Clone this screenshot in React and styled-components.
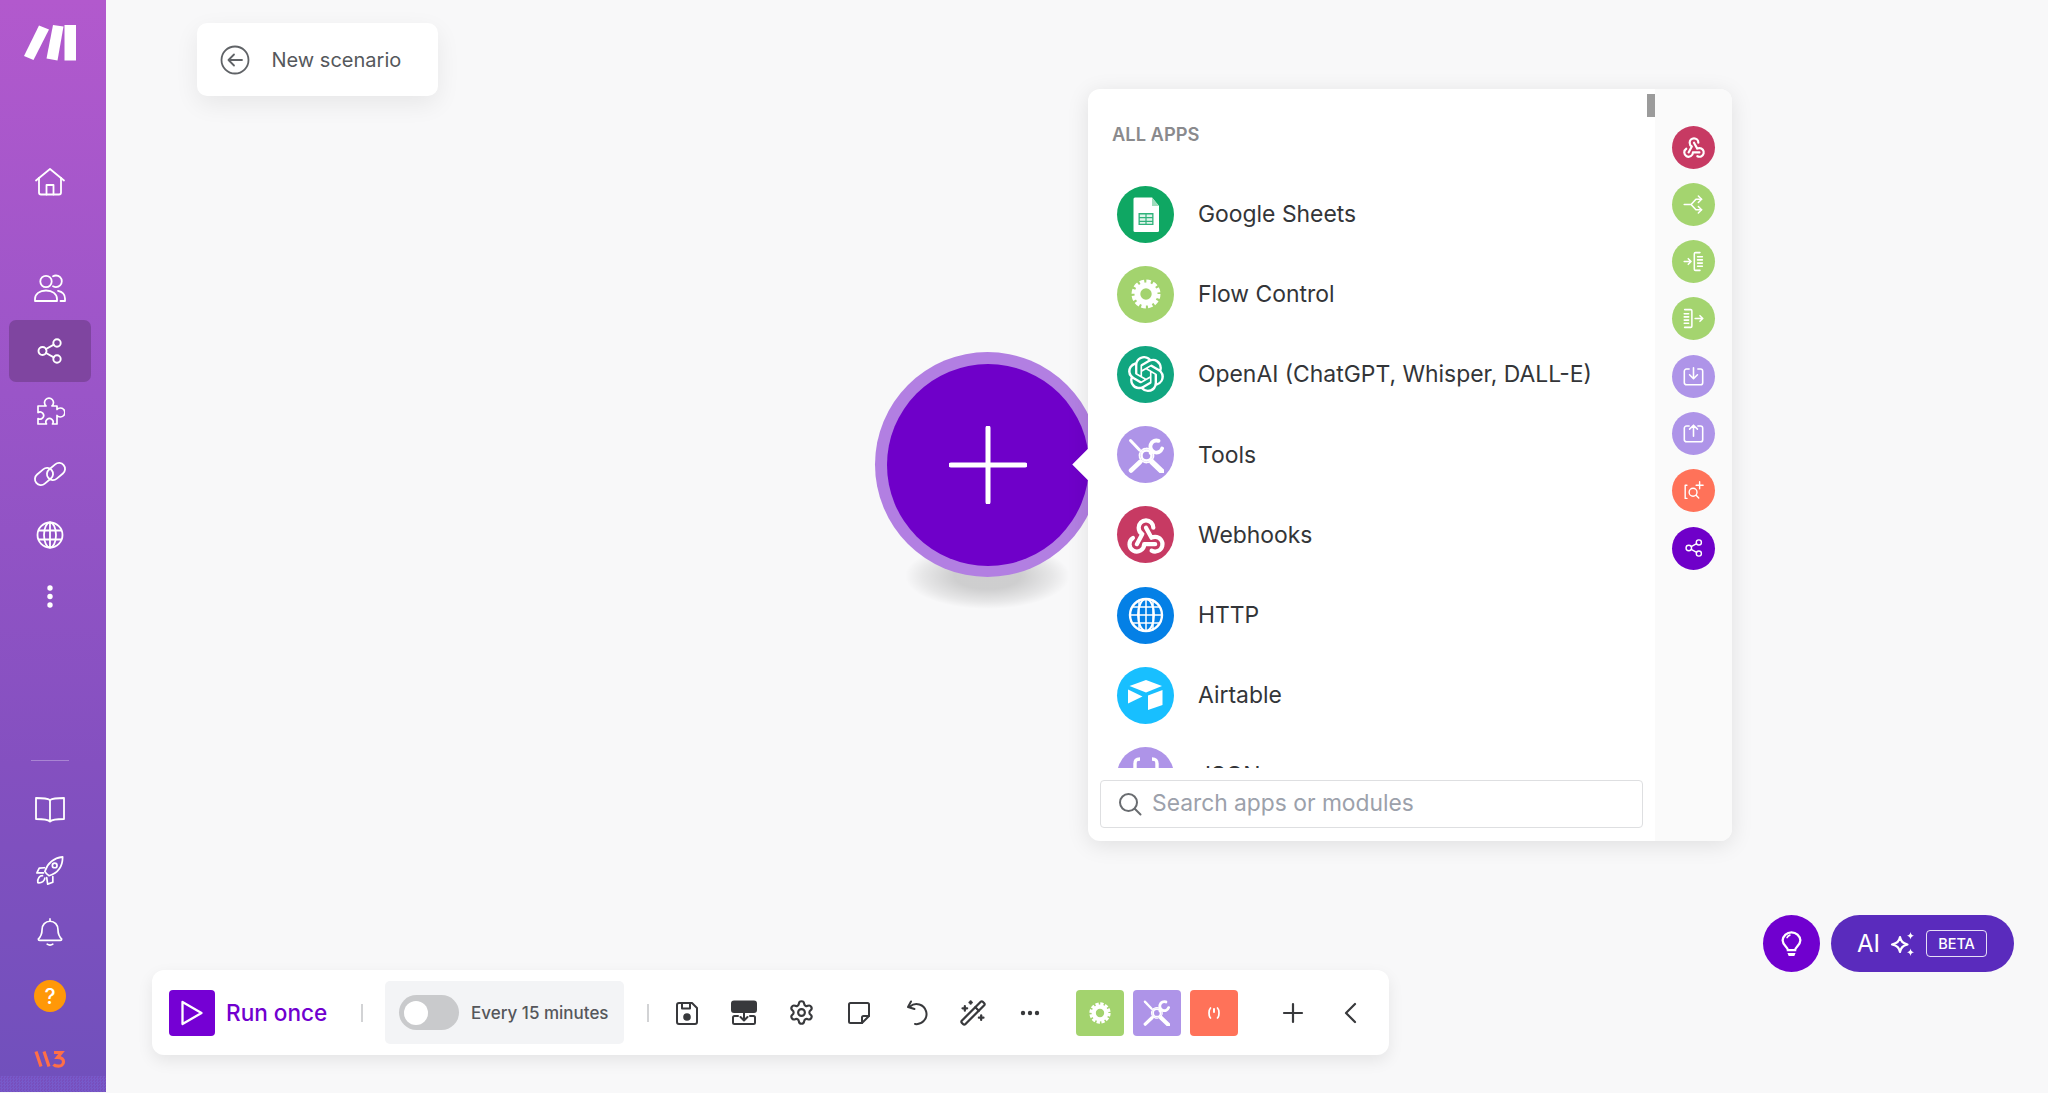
import React from "react";
import styled, { createGlobalStyle } from "styled-components";
import { SiOpenai } from "react-icons/si";
import { TbWebhook } from "react-icons/tb";
import { Settings, WandSparkles } from "lucide-react";

const Global = createGlobalStyle`
  html, body { margin: 0; padding: 0; background: #f8f8f9; }
  body { font-family: Inter, "Noto Sans", sans-serif; overflow: hidden; }
  * { box-sizing: border-box; }
`;

const Page = styled.div`
  display: flex;
  width: 2048px;
  height: 1093px;
  overflow: hidden;
  background: #f8f8f9;
`;

const Sidebar = styled.nav`
  position: relative;
  width: 106px;
  height: 1092px;
  flex: none;
  display: flex;
  flex-direction: column;
  align-items: center;
  padding: 24px 6px 0 0;
  background: linear-gradient(180deg, #b259cd 0%, #9a55c8 36%, #8450c0 70%, #7050bc 100%);
  &::after {
    content: "";
    position: absolute;
    left: 0;
    right: 0;
    bottom: 0;
    height: 16px;
    background: repeating-conic-gradient(#7a5ed0 0 25%, #7a4fbe 0 50%) 0 0 / 3px 3px;
    opacity: 0.7;
  }
`;

const LogoWrap = styled.div`
  width: 52px;
  height: 37px;
  margin-bottom: 90px;
`;

const NavItem = styled.div`
  width: 82px;
  height: ${(p) => p.$h || 61.5}px;
  flex: none;
  display: flex;
  align-items: center;
  justify-content: center;
  border-radius: 7px;
  background: ${(p) => (p.$active ? "#7f45a0" : "transparent")};
  margin-top: ${(p) => p.$mt || 0}px;
  color: #fff;
`;

const Divider = styled.div`
  width: 38px;
  height: 1px;
  flex: none;
  margin-top: auto;
  margin-bottom: 18px;
  background: rgba(255, 255, 255, 0.3);
`;

const HelpBadge = styled.div`
  width: 32px;
  height: 32px;
  border-radius: 50%;
  background: #ff9808;
  color: #fff;
  font-size: 21px;
  font-weight: 500;
  display: flex;
  align-items: center;
  justify-content: center;
`;

const BrandMark = styled.div`
  height: 60px;
  flex: none;
  margin-bottom: 3px;
  display: flex;
  align-items: center;
  position: relative;
  z-index: 1;
`;

const Canvas = styled.main`
  position: relative;
  flex: 1;
  height: 100%;
  isolation: isolate;
`;

const ScenarioCard = styled.div`
  position: absolute;
  left: 91px;
  top: 23px;
  width: 241px;
  height: 73px;
  display: flex;
  align-items: center;
  gap: 21.5px;
  padding-left: 23px;
  background: #fff;
  border-radius: 10px;
  box-shadow: 0 8px 24px rgba(0, 0, 0, 0.07);
  color: #55585c;
  font-size: 20px;
`;

const AddNode = styled.div`
  position: absolute;
  left: 769px;
  top: 352px;
  width: 225px;
  height: 225px;
  border-radius: 50%;
  background: #b27fe2;
  display: flex;
  align-items: center;
  justify-content: center;
  &::after {
    content: "";
    position: absolute;
    left: 30px;
    bottom: -32px;
    width: 165px;
    height: 66px;
    z-index: -1;
    background: radial-gradient(closest-side, rgba(0, 0, 0, 0.17) 40%, rgba(0, 0, 0, 0.07) 78%, rgba(0, 0, 0, 0));
  }
`;

const AddInner = styled.div`
  width: 202px;
  height: 202px;
  border-radius: 50%;
  background: #6f00c9;
  display: flex;
  align-items: center;
  justify-content: center;
`;

const Panel = styled.section`
  position: absolute;
  left: 982px;
  top: 89px;
  width: 644px;
  height: 752px;
  display: flex;
  background: #fff;
  border-radius: 12px;
  box-shadow: 0 4px 22px rgba(0, 0, 0, 0.1);
  &::before {
    content: "";
    position: absolute;
    left: -11px;
    top: 364px;
    width: 23px;
    height: 23px;
    background: #fff;
    transform: rotate(45deg);
  }
`;

const PanelMain = styled.div`
  position: relative;
  width: 567px;
  flex: none;
  display: flex;
  flex-direction: column;
`;

const Scrollbar = styled.div`
  position: absolute;
  right: 0;
  top: 5px;
  width: 8px;
  height: 23px;
  background: #9b9b9b;
`;

const AppList = styled.div`
  height: 679px;
  overflow: hidden;
  flex: none;
`;

const ListTitle = styled.h3`
  margin: 0;
  height: 85px;
  padding: 35px 0 0 24px;
  font-size: 18.3px;
  line-height: 20px;
  font-weight: 600;
  color: #8a8a8d;
`;

const AppRow = styled.div`
  height: 80.2px;
  display: flex;
  align-items: center;
  gap: 24px;
  padding-left: 29px;
  font-size: 22.9px;
  color: #333538;
`;

const AppDisc = styled.div`
  width: 57px;
  height: 57px;
  flex: none;
  border-radius: 50%;
  background: ${(p) => p.$bg};
  color: #fff;
  display: flex;
  align-items: center;
  justify-content: center;
`;

const SearchBox = styled.label`
  margin: 12px 0 0 12px;
  width: 543px;
  height: 48px;
  flex: none;
  display: flex;
  align-items: center;
  gap: 10px;
  padding-left: 17px;
  border: 1.5px solid #dedfe1;
  border-radius: 4px;
  background: #fff;
`;

const SearchInput = styled.input`
  border: 0;
  outline: 0;
  flex: 1;
  min-width: 0;
  background: transparent;
  font-family: inherit;
  font-size: 22.8px;
  line-height: 28px;
  padding: 0 0 2px;
  color: #333;
  &::placeholder { color: #9ca1ab; opacity: 1; }
`;

const Strip = styled.aside`
  flex: 1;
  background: #fafafa;
  border-radius: 0 12px 12px 0;
  display: flex;
  flex-direction: column;
  align-items: center;
  gap: 14.3px;
  padding-top: 36.5px;
`;

const StripDisc = styled.div`
  width: 43px;
  height: 43px;
  flex: none;
  border-radius: 50%;
  background: ${(p) => p.$bg};
  color: #fff;
  display: flex;
  align-items: center;
  justify-content: center;
`;

const Toolbar = styled.div`
  position: absolute;
  left: 46px;
  top: 970px;
  width: 1237px;
  height: 85px;
  display: flex;
  align-items: center;
  padding-left: 17px;
  background: #fff;
  border-radius: 12px;
  box-shadow: 0 6px 16px rgba(0, 0, 0, 0.08);
`;

const PlayButton = styled.div`
  width: 46px;
  height: 46px;
  flex: none;
  border-radius: 4px;
  background: #7500d4;
  display: flex;
  align-items: center;
  justify-content: center;
`;

const RunLabel = styled.span`
  margin-left: 11px;
  width: 135px;
  flex: none;
  font-size: 22.6px;
  font-weight: 500;
  color: #7100cf;
`;

const Sep = styled.div`
  width: 2px;
  height: 18px;
  flex: none;
  background: #d2d3d5;
  margin: ${(p) => p.$m};
`;

const ScheduleBlock = styled.div`
  width: 239px;
  height: 63px;
  flex: none;
  display: flex;
  align-items: center;
  gap: 12px;
  padding-left: 14px;
  background: #f3f4f6;
  border-radius: 5px;
  font-size: 17px;
  font-weight: 500;
  color: #55575b;
`;

const Toggle = styled.div`
  width: 60px;
  height: 35px;
  flex: none;
  display: flex;
  align-items: center;
  padding-left: 5px;
  border-radius: 18px;
  background: #c9cacc;
  &::before {
    content: "";
    width: 24px;
    height: 24px;
    border-radius: 50%;
    background: #fff;
  }
`;

const ToolIcon = styled.div`
  width: 57.3px;
  height: 46px;
  flex: none;
  display: flex;
  align-items: center;
  justify-content: center;
  color: #38393c;
  margin-left: ${(p) => p.$ml || 0}px;
`;

const Tile = styled.div`
  width: 48px;
  height: 46px;
  flex: none;
  border-radius: 4px;
  background: ${(p) => p.$bg};
  color: #fff;
  display: flex;
  align-items: center;
  justify-content: center;
  margin-left: ${(p) => p.$ml}px;
`;

const AiDock = styled.div`
  position: absolute;
  left: 1657px;
  top: 915px;
  display: flex;
  gap: 11px;
`;

const BulbButton = styled.div`
  width: 57px;
  height: 57px;
  border-radius: 50%;
  background: #7000cf;
  color: #fff;
  display: flex;
  align-items: center;
  justify-content: center;
`;

const AiPill = styled.div`
  width: 183px;
  height: 57px;
  border-radius: 29px;
  background: #5a2bbd;
  color: #fff;
  display: flex;
  align-items: center;
  gap: 10px;
  padding-left: 26px;
  font-size: 24px;
`;

const Beta = styled.span`
  width: 61px;
  height: 27px;
  border: 1.5px solid rgba(255, 255, 255, 0.85);
  border-radius: 4px;
  display: flex;
  align-items: center;
  justify-content: center;
  font-size: 14.5px;
  font-weight: 500;
`;

const Svg = ({ s = 32, vb = 32, sw = 1.8, children }) => (
  <svg width={s} height={s} viewBox={`0 0 ${vb} ${vb}`} fill="none" stroke="currentColor"
    strokeWidth={sw} strokeLinecap="round" strokeLinejoin="round">
    {children}
  </svg>
);

const Logo = () => (
  <svg width="52" height="37" viewBox="0 0 52 37" fill="#fff">
    <path d="M15 1.500 25 5.500 9.500 36 0 32Z" />
    <path d="M29 1 39.500 2.500 33.500 36.500 22.500 34.500Z" />
    <path d="M40.500 1H52V36.500H40.500Z" />
  </svg>
);

const HomeIcon = () => (
  <Svg s={32}>
    <path d="M2 14.500 16 3l14 11.500" />
    <path d="M5 12v14.500a2 2 0 0 0 2 2h18a2 2 0 0 0 2-2V12" />
    <path d="M12.500 28.500V19h7v9.500" />
  </Svg>
);

const UsersIcon = () => (
  <Svg s={34} vb={34}>
    <circle cx="13" cy="9.500" r="5.700" />
    <path d="M20 4.300a5.600 5.600 0 0 1 3-.8 5.800 5.800 0 0 1 0 11.600c-1 0-2-.3-3-.8" />
    <path d="M2 29v-2c0-5 4.500-8.500 11-8.500S24 22 24 27v2Z" />
    <path d="M25 18.800c4 .8 7 3.700 7 7.700V29h-4.500" />
  </Svg>
);

const ShareIcon = ({ s = 26, sw = 1.9 }) => (
  <Svg s={s} vb={26} sw={sw}>
    <circle cx="5.500" cy="13" r="4" />
    <circle cx="20" cy="5" r="3.700" />
    <circle cx="20" cy="21" r="3.700" />
    <path d="m9 11 7.800-4.300M9 15l7.800 4.300" />
  </Svg>
);

const PuzzleIcon = () => (
  <Svg s={30} vb={30} sw={1.700}>
    <path d="M3 9H11a4.500 4.500 0 1 1 6 0H22V12.500a4.500 4.500 0 1 1 0 6V27H17.500a3.600 3.600 0 1 0-6 0H3V21.500a3.600 3.600 0 1 0 0-6Z" />
  </Svg>
);

const LinkIcon = () => (
  <Svg s={34} vb={34}>
    <rect x="1" y="13.500" width="20" height="12" rx="6" transform="rotate(-40 11 19.500)" />
    <rect x="13" y="8.500" width="20" height="12" rx="6" transform="rotate(-40 23 14.500)" />
  </Svg>
);

const GlobeIcon = () => (
  <Svg s={28} vb={28} sw={1.800}>
    <circle cx="14" cy="14" r="12.500" />
    <ellipse cx="14" cy="14" rx="6" ry="12.500" />
    <path d="M14 1.500v25M3 9.500h22M3 18.500h22" />
  </Svg>
);

const DotsV = () => (
  <svg width="6" height="23" viewBox="0 0 6 23" fill="#fff">
    <circle cx="3" cy="3" r="2.700" />
    <circle cx="3" cy="11.500" r="2.700" />
    <circle cx="3" cy="20" r="2.700" />
  </svg>
);

const BookIcon = () => (
  <Svg s={32}>
    <path d="M16 7c-2.500-1.600-6-2-14-2v21c8 0 12 .5 14 2.500 2-2 6-2.500 14-2.500V5c-8 0-11.500.4-14 2Z" />
    <path d="M16 7v21" />
  </Svg>
);

const RocketIcon = () => (
  <Svg s={30}>
    <path d="M14 22c-2-1-3.500-2.500-4.500-4.500 2-6 7-14 19-15.500 0 11-6.500 17.500-14.500 20Z" transform="translate(1 -1)" />
    <circle cx="21" cy="10" r="2.500" />
    <path d="M10 12.500 4.500 13 2 18h7" />
    <path d="M19 22v6l-5.500 2-1-7" />
    <path d="M8 21c-3 0-5.500 2.500-5 7.500 4.500.5 7.500-2 7.500-5" />
  </Svg>
);

const BellIcon = () => (
  <Svg s={30}>
    <path d="M16 2v2.500" />
    <path d="M16 4.500c-5 0-8.500 4-8.500 9 0 5-1.500 7.500-4 10 0 1 .5 1.500 1.500 1.500h22c1 0 1.500-.5 1.500-1.500-2.500-2.500-4-5-4-10 0-5-3.500-9-8.500-9Z" />
    <path d="M13 29c1.500 1.200 4.500 1.200 6 0" />
  </Svg>
);

const W3Mark = () => (
  <svg width="32" height="18" viewBox="0 0 32 18" fill="none" stroke="#ff6f47" strokeWidth="3.200">
    <path d="M2 1.500 7 16.500M10 1.500 15 16.500" />
    <path d="M20 2.500h7.500l-4 5c3 0 6 .8 6 4.200 0 3-2.500 4.500-5 4.500-2 0-4-.5-5-1.700" />
  </svg>
);

const BackIcon = () => (
  <svg width="30" height="30" viewBox="0 0 30 30" fill="none" stroke="#606367" strokeWidth="1.800" strokeLinecap="round" strokeLinejoin="round">
    <circle cx="15" cy="15" r="13.500" />
    <path d="M22 15H8.500M14 9.500 8.500 15l5.500 5.500" />
  </svg>
);

const PlusIcon = () => (
  <svg width="78" height="78" viewBox="0 0 78 78" stroke="#fff" strokeWidth="5" strokeLinecap="round">
    <path d="M39 2v74M2 39h74" />
  </svg>
);

const SheetIcon = () => (
  <svg width="57" height="57" viewBox="0 0 57 57">
    <path d="M18 11.500h17l7 8.500v24.500a1.500 1.500 0 0 1-1.500 1.500H18a1.500 1.500 0 0 1-1.500-1.500V13A1.500 1.500 0 0 1 18 11.500Z" fill="#fff" />
    <path d="M35 11.500l7 8.500h-7Z" fill="#9fdcbc" />
    <path d="M21.500 27h15v12h-15Z" fill="#2fb27a" />
    <path d="M22.800 28.500h5.600v2.400h-5.600ZM29.600 28.500h5.600v2.400h-5.600ZM22.800 32.300h5.600v2.400h-5.600ZM29.600 32.300h5.600v2.400h-5.600ZM22.800 36h5.600v1.800h-5.600ZM29.600 36h5.600v1.800h-5.600Z" fill="#fff" fillOpacity=".85" />
  </svg>
);

const GearGlyph = ({ s = 30 }) => (
  <svg width={s} height={s} viewBox="0 0 30 30" fill="none" stroke="#fff">
    <circle cx="15" cy="15" r="12" strokeWidth="5" strokeDasharray="4.280 2" />
    <circle cx="15" cy="15" r="8.600" strokeWidth="5.800" />
  </svg>
);

const ToolsGlyph = ({ s = 36 }) => (
  <svg width={s} height={s} viewBox="0 0 36 36" fill="none" stroke="#fff" strokeLinecap="round">
    <path d="M2.500 3.500l9 9.500" strokeWidth="3" />
    <path d="M24 25l10 9.500" strokeWidth="5.500" />
    <path d="M3 33.500 12 25" strokeWidth="4.500" />
    <path d="M24 14.500l-1.500 1.500" strokeWidth="3.500" />
    <path d="M30.500 3.900A6 6 0 1 0 34.100 11.500" strokeWidth="3.800" />
    <circle cx="18.500" cy="18.500" r="5" strokeWidth="2.400" />
    <circle cx="18.500" cy="18.500" r="7" strokeWidth="1.800" strokeDasharray="2.200 1.460" />
  </svg>
);

const HttpGlyph = () => (
  <svg width="36" height="36" viewBox="0 0 36 36" fill="none" stroke="#fff" strokeWidth="2">
    <circle cx="18" cy="18" r="16" strokeWidth="2.400" />
    <ellipse cx="18" cy="18" rx="8" ry="16" />
    <path d="M18 2v32M11 2.500v31M25 2.500v31M4 10h28M2 18h32M4 26h28" strokeWidth="1.500" />
  </svg>
);

const AirtableGlyph = () => (
  <svg width="36" height="30" viewBox="0 0 36 30" fill="#fff">
    <path d="M18 0 34 6 18 12.500 1.500 6Z" />
    <path d="M34.500 10v15L20 30V15.500Z" />
    <path d="M0 9.500v14l14.500-7Z" />
  </svg>
);

const JsonGlyph = () => (
  <svg width="32" height="36" viewBox="0 0 32 36" fill="none" stroke="#fff" strokeWidth="3.400">
    <path d="M10 2c-4 0-5 1.500-5 5v6c0 3-1 4-3 5 2 1 3 2 3 5v6c0 3.500 1 5 5 5" />
    <path d="M22 2c4 0 5 1.500 5 5v6c0 3 1 4 3 5-2 1-3 2-3 5v6c0 3.500-1 5-5 5" />
  </svg>
);

const SplitGlyph = () => (
  <Svg s={21} vb={26} sw={1.900}>
    <path d="M1.500 13H10l6-6.500h7M10 13l6 6.500h7" />
    <path d="M19 2.500 23 6.500l-4 4M19 15.500l4 4-4 4" />
  </Svg>
);

const ListIn = () => (
  <Svg s={21} vb={26} sw={1.900}>
    <path d="M1.500 13H10M6.500 9.500 10 13l-3.500 3.500" />
    <path d="M21 2h-5.500a1.500 1.500 0 0 0-1.500 1.500v19a1.500 1.500 0 0 0 1.500 1.500H21" />
    <path d="M18 7h6M18 11h6M18 15h6M18 19h6" />
  </Svg>
);

const ListOut = () => (
  <Svg s={21} vb={26} sw={1.900}>
    <path d="M15 13h9.500M21 9.500l3.500 3.500-3.500 3.500" />
    <path d="M2 2h7.500A1.500 1.500 0 0 1 11 3.500v19A1.500 1.500 0 0 1 9.500 24H2" />
    <path d="M1.500 7H7M1.500 11H7M1.500 15H7M1.500 19H7" />
  </Svg>
);

const TrayIn = () => (
  <Svg s={21} vb={24} sw={1.800}>
    <path d="M7 3.500H4A2.500 2.500 0 0 0 1.500 6v13A2.500 2.500 0 0 0 4 21.500h16a2.500 2.500 0 0 0 2.500-2.500V6A2.500 2.500 0 0 0 20 3.500h-3" />
    <path d="M12 2v12M7.500 10l4.500 4.500 4.500-4.500" />
  </Svg>
);

const TrayOut = () => (
  <Svg s={21} vb={24} sw={1.800}>
    <path d="M7 3.500H4A2.500 2.500 0 0 0 1.500 6v13A2.500 2.500 0 0 0 4 21.500h16a2.500 2.500 0 0 0 2.500-2.500V6A2.500 2.500 0 0 0 20 3.500h-3" />
    <path d="M12 15V2.500M7.500 7 12 2.500 16.500 7" />
  </Svg>
);

const SearchAdd = () => (
  <Svg s={21} vb={24} sw={1.600}>
    <path d="M4.500 6H2.500v15h2" />
    <circle cx="11.500" cy="14" r="4.500" />
    <path d="m15 17.500 3 3M19 2v8M15 6h8" />
  </Svg>
);

const SearchIcon = () => (
  <svg width="24" height="24" viewBox="0 0 24 24" fill="none" stroke="#696c70" strokeWidth="2" strokeLinecap="round">
    <circle cx="10.500" cy="10.500" r="8.500" />
    <path d="m17 17 5.500 5.500" />
  </svg>
);

const PlayGlyph = () => (
  <svg width="24" height="26" viewBox="0 0 24 26" fill="none" stroke="#fff" strokeWidth="2.300" strokeLinejoin="round">
    <path d="M2.500 2 21.500 13 2.500 24Z" />
  </svg>
);

const SaveIcon = () => (
  <Svg s={26} vb={26} sw={2}>
    <path d="M5 3h13l5 5v14a2 2 0 0 1-2 2H5a2 2 0 0 1-2-2V5a2 2 0 0 1 2-2Z" />
    <path d="M8 3v5.500h8V3" />
    <circle cx="13" cy="17" r="2.800" fill="currentColor" />
  </Svg>
);

const StackIcon = () => (
  <svg width="26" height="26" viewBox="0 0 26 26" fill="none" stroke="currentColor" strokeWidth="2" strokeLinecap="round" strokeLinejoin="round">
    <rect x="1" y="1.500" width="24" height="10.500" rx="2" fill="currentColor" />
    <path d="M7 16H3.500A1.500 1.500 0 0 0 2 17.500v5A1.500 1.500 0 0 0 3.500 24h19a1.500 1.500 0 0 0 1.500-1.500v-5a1.500 1.500 0 0 0-1.500-1.500H19" />
    <path d="M13 13v7M9.500 17l3.500 3.500 3.500-3.500" />
  </svg>
);

const NoteIcon = () => (
  <Svg s={24} vb={24} sw={2}>
    <path d="M22 15V3.500A1.500 1.500 0 0 0 20.500 2h-17A1.500 1.500 0 0 0 2 3.500v17A1.500 1.500 0 0 0 3.500 22H15Z" />
    <path d="M22 15h-5.500a1.500 1.500 0 0 0-1.500 1.500V22" />
  </Svg>
);

const UndoIcon = () => (
  <Svg s={26} vb={26} sw={2}>
    <path d="M7 6.500A10 10 0 1 1 12 24" />
    <path d="M8 1.500 5 7l6.500 2" />
  </Svg>
);

const DotsH = () => (
  <svg width="20" height="6" viewBox="0 0 20 6" fill="currentColor">
    <circle cx="3" cy="3" r="2.200" />
    <circle cx="10" cy="3" r="2.200" />
    <circle cx="17" cy="3" r="2.200" />
  </svg>
);

const PlusDark = () => (
  <Svg s={22} vb={22} sw={2.200}>
    <path d="M11 2v18M2 11h18" />
  </Svg>
);

const ChevronIcon = () => (
  <Svg s={24} vb={24} sw={2.200}>
    <path d="M16 3 7 12l9 9" />
  </Svg>
);

const BracketGlyph = () => (
  <svg width="14" height="12" viewBox="0 0 14 12" fill="none" stroke="#fff" strokeWidth="1.700" strokeLinecap="round">
    <path d="M3.500 1C1.500 3 1.500 9 3.500 11M10.500 1C12.500 3 12.500 9 10.500 11" />
    <path d="M7 2v3" strokeWidth="2" />
  </svg>
);

const BulbIcon = () => (
  <svg width="21" height="26" viewBox="0 0 26 32" fill="none" stroke="#fff" strokeWidth="2.800" strokeLinecap="round">
    <path d="M8.500 23.500c0-3.500-6.500-6-6.500-12A11 11 0 0 1 13 1.500a11 11 0 0 1 11 10c0 6-6.500 8.500-6.500 12Z" />
    <path d="M7.500 8c.8-1.500 2-2.500 3.500-3" strokeWidth="2" />
    <path d="M8 27h10l-1.500 4h-7Z" fill="#fff" stroke="none" />
  </svg>
);

const SparkIcon = () => (
  <svg width="26" height="26" viewBox="0 0 26 26" fill="none" stroke="#fff" strokeWidth="2.200" strokeLinejoin="round">
    <path d="M10 6c1 4.500 2.500 6 7.500 7.500C12.500 15 11 16.500 10 21 9 16.500 7.500 15 2 13.500 7.500 12 9 10.500 10 6Z" />
    <path d="M20.500 1c.5 2.500 1.200 3.200 3.500 3.800-2.300.6-3 1.300-3.500 3.800-.5-2.500-1.200-3.200-3.500-3.800 2.300-.6 3-1.300 3.500-3.800ZM20.500 17.500c.5 2.500 1.200 3.200 3.500 3.800-2.300.6-3 1.300-3.500 3.700-.5-2.400-1.200-3.100-3.500-3.700 2.300-.6 3-1.300 3.500-3.800Z" fill="#fff" stroke="none" />
  </svg>
);

const apps = [
  ["Google Sheets", "#0fa763", <SheetIcon />],
  ["Flow Control", "#a3d36e", <GearGlyph />],
  ["OpenAI (ChatGPT, Whisper, DALL-E)", "#11a680", <SiOpenai size={36} />],
  ["Tools", "#ae94e8", <ToolsGlyph />],
  ["Webhooks", "#c73a63", <TbWebhook size={44} strokeWidth={2.3} />],
  ["HTTP", "#0480e6", <HttpGlyph />],
  ["Airtable", "#18bfff", <AirtableGlyph />],
  ["JSON", "#ae94e8", <JsonGlyph />],
];

const quick = [
  ["#c73a63", <TbWebhook size={26} strokeWidth={2} />],
  ["#a4d46f", <SplitGlyph />],
  ["#a4d46f", <ListIn />],
  ["#a4d46f", <ListOut />],
  ["#ae94e8", <TrayIn />],
  ["#ae94e8", <TrayOut />],
  ["#ff7259", <SearchAdd />],
  ["#6f00c9", <ShareIcon s={18} sw={2} />],
];

export default function App() {
  return (
    <Page>
      <Global />
      <Sidebar>
        <LogoWrap><Logo /></LogoWrap>
        <NavItem><HomeIcon /></NavItem>
        <NavItem $mt={46}><UsersIcon /></NavItem>
        <NavItem $active><ShareIcon /></NavItem>
        <NavItem><PuzzleIcon /></NavItem>
        <NavItem><LinkIcon /></NavItem>
        <NavItem><GlobeIcon /></NavItem>
        <NavItem><DotsV /></NavItem>
        <Divider />
        <NavItem><BookIcon /></NavItem>
        <NavItem><RocketIcon /></NavItem>
        <NavItem><BellIcon /></NavItem>
        <NavItem $h={66}><HelpBadge>?</HelpBadge></NavItem>
        <BrandMark><W3Mark /></BrandMark>
      </Sidebar>
      <Canvas>
        <ScenarioCard><BackIcon />New scenario</ScenarioCard>
        <AddNode>
          <AddInner><PlusIcon /></AddInner>
        </AddNode>
        <Panel>
          <PanelMain>
            <AppList>
              <ListTitle>ALL APPS</ListTitle>
              {apps.map(([name, bg, icon]) => (
                <AppRow key={name}>
                  <AppDisc $bg={bg}>{icon}</AppDisc>
                  {name}
                </AppRow>
              ))}
            </AppList>
            <SearchBox>
              <SearchIcon />
              <SearchInput placeholder="Search apps or modules" />
            </SearchBox>
            <Scrollbar />
          </PanelMain>
          <Strip>
            {quick.map(([bg, icon], i) => (
              <StripDisc key={i} $bg={bg}>{icon}</StripDisc>
            ))}
          </Strip>
        </Panel>
        <Toolbar>
          <PlayButton><PlayGlyph /></PlayButton>
          <RunLabel>Run once</RunLabel>
          <Sep $m="0 22px 0 0" />
          <ScheduleBlock><Toggle />Every 15 minutes</ScheduleBlock>
          <Sep $m="0 9px 0 23px" />
          <ToolIcon><SaveIcon /></ToolIcon>
          <ToolIcon><StackIcon /></ToolIcon>
          <ToolIcon><Settings size={27} strokeWidth={1.9} /></ToolIcon>
          <ToolIcon><NoteIcon /></ToolIcon>
          <ToolIcon><UndoIcon /></ToolIcon>
          <ToolIcon><WandSparkles size={28} strokeWidth={1.9} /></ToolIcon>
          <ToolIcon><DotsH /></ToolIcon>
          <Tile $bg="#a3d36e" $ml={16.5}><GearGlyph s={22} /></Tile>
          <Tile $bg="#ae94e8" $ml={9}><ToolsGlyph s={27} /></Tile>
          <Tile $bg="#ff7259" $ml={9}><BracketGlyph /></Tile>
          <ToolIcon $ml={27}><PlusDark /></ToolIcon>
          <ToolIcon><ChevronIcon /></ToolIcon>
        </Toolbar>
        <AiDock>
          <BulbButton><BulbIcon /></BulbButton>
          <AiPill>AI<SparkIcon /><Beta>BETA</Beta></AiPill>
        </AiDock>
      </Canvas>
    </Page>
  );
}
